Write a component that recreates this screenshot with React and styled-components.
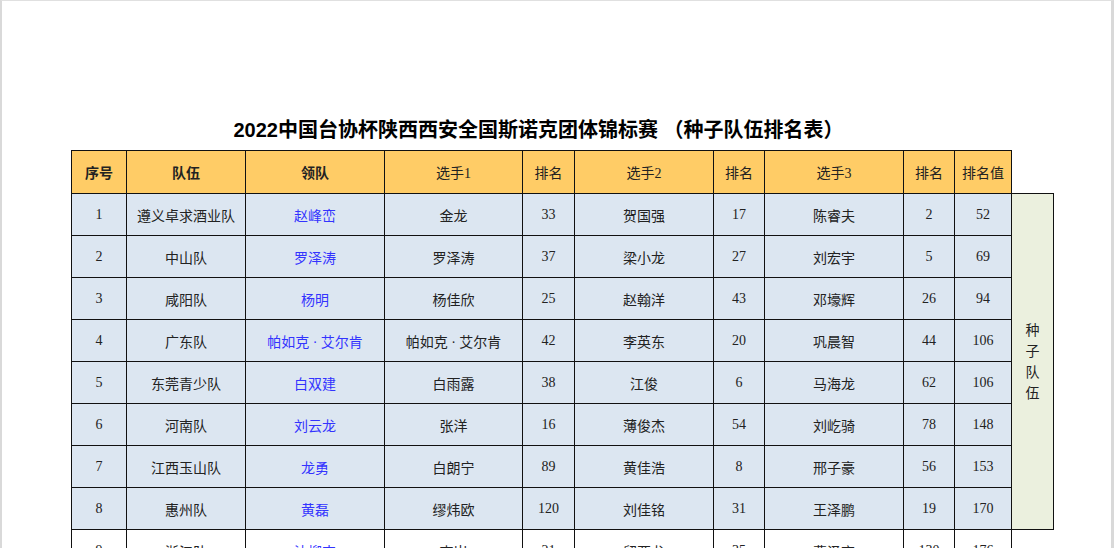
import React from "react";
import styled, { createGlobalStyle } from "styled-components";

const Global = createGlobalStyle`
  html, body { margin: 0; padding: 0; background: #fff; overflow: hidden; }
  body { font-family: "Liberation Serif", "Noto Sans CJK SC", serif; }
`;

const Page = styled.div`
  width: 1114px; height: 548px; box-sizing: border-box;
  border-left: 2px solid #d9d9d9; border-right: 3px solid #d9d9d9; border-top: 1px solid #e0e0e0;
  padding-top: 115px; overflow: hidden;
`;
const Title = styled.h1`
  margin: 0 0 6px 0; padding-right: 36px; text-align: center; font-size: 20px; line-height: 28px;
  font-weight: bold; font-family: "Liberation Sans", "Noto Sans CJK SC", sans-serif; color: #000;
`;
const Table = styled.table`
  border-collapse: collapse; margin-left: 69px; table-layout: fixed;
`;
const Th = styled.th`
  height: 42px; padding: 0; background: #ffcc66; border: 1.5px solid #111;
  font-size: 14px; color: #222; font-weight: ${p => (p.$bold ? "bold" : "normal")};
  font-family: ${p => (p.$bold ? `"Liberation Sans", "Noto Sans CJK SC", sans-serif` : `"Liberation Serif", "Noto Sans CJK SC", serif`)};
`;
const Td = styled.td`
  height: 41px; padding: 0; text-align: center; font-size: 14px; border: 1.5px solid #111;
  background: ${p => (p.$plain ? "#fff" : "#dce6f1")};
  color: ${p => (p.$blue ? "#3333ff" : "#222")};
`;
const Side = styled.td`
  background: #ebf0de; border: 1.5px solid #111; text-align: center; vertical-align: middle;
  font-size: 14px; color: #222; line-height: 21px; padding: 0 13px;
`;
const Empty = styled.th`border: none; background: none;`;

const widths = [55, 119, 139, 138, 52, 139, 51, 139, 51, 57, 42];
const heads = [["序号", 1], ["队伍", 1], ["领队", 1], ["选手1"], ["排名"], ["选手2"], ["排名"], ["选手3"], ["排名"], ["排名值"]];
const rows = [
  ["1", "遵义卓求酒业队", "赵峰峦", "金龙", "33", "贺国强", "17", "陈睿夫", "2", "52"],
  ["2", "中山队", "罗泽涛", "罗泽涛", "37", "梁小龙", "27", "刘宏宇", "5", "69"],
  ["3", "咸阳队", "杨明", "杨佳欣", "25", "赵翰洋", "43", "邓壕辉", "26", "94"],
  ["4", "广东队", "帕如克 · 艾尔肯", "帕如克 · 艾尔肯", "42", "李英东", "20", "巩晨智", "44", "106"],
  ["5", "东莞青少队", "白双建", "白雨露", "38", "江俊", "6", "马海龙", "62", "106"],
  ["6", "河南队", "刘云龙", "张洋", "16", "薄俊杰", "54", "刘屹骑", "78", "148"],
  ["7", "江西玉山队", "龙勇", "白朗宁", "89", "黄佳浩", "8", "邢子豪", "56", "153"],
  ["8", "惠州队", "黄磊", "缪炜欧", "120", "刘佳铭", "31", "王泽鹏", "19", "170"],
  ["9", "浙江队", "沈柳杰", "李岩", "21", "留亚龙", "35", "曹泽齐", "130", "176"],
];

export default function App() {
  return (
    <Page>
      <Global />
      <Title>2022中国台协杯陕西西安全国斯诺克团体锦标赛 （种子队伍排名表）</Title>
      <Table>
        <colgroup>{widths.map((w, i) => <col key={i} style={{ width: w }} />)}</colgroup>
        <thead>
          <tr>
            {heads.map(([h, b], i) => <Th key={i} $bold={!!b}>{h}</Th>)}
            <Empty />
          </tr>
        </thead>
        <tbody>
          {rows.map((r, ri) => (
            <tr key={ri}>
              {r.map((c, ci) => <Td key={ci} $blue={ci === 2} $plain={ri === 8}>{c}</Td>)}
              {ri === 0 && <Side rowSpan={8}>种<br />子<br />队<br />伍</Side>}
              {ri === 8 && <Empty as="td" />}
            </tr>
          ))}
        </tbody>
      </Table>
    </Page>
  );
}
